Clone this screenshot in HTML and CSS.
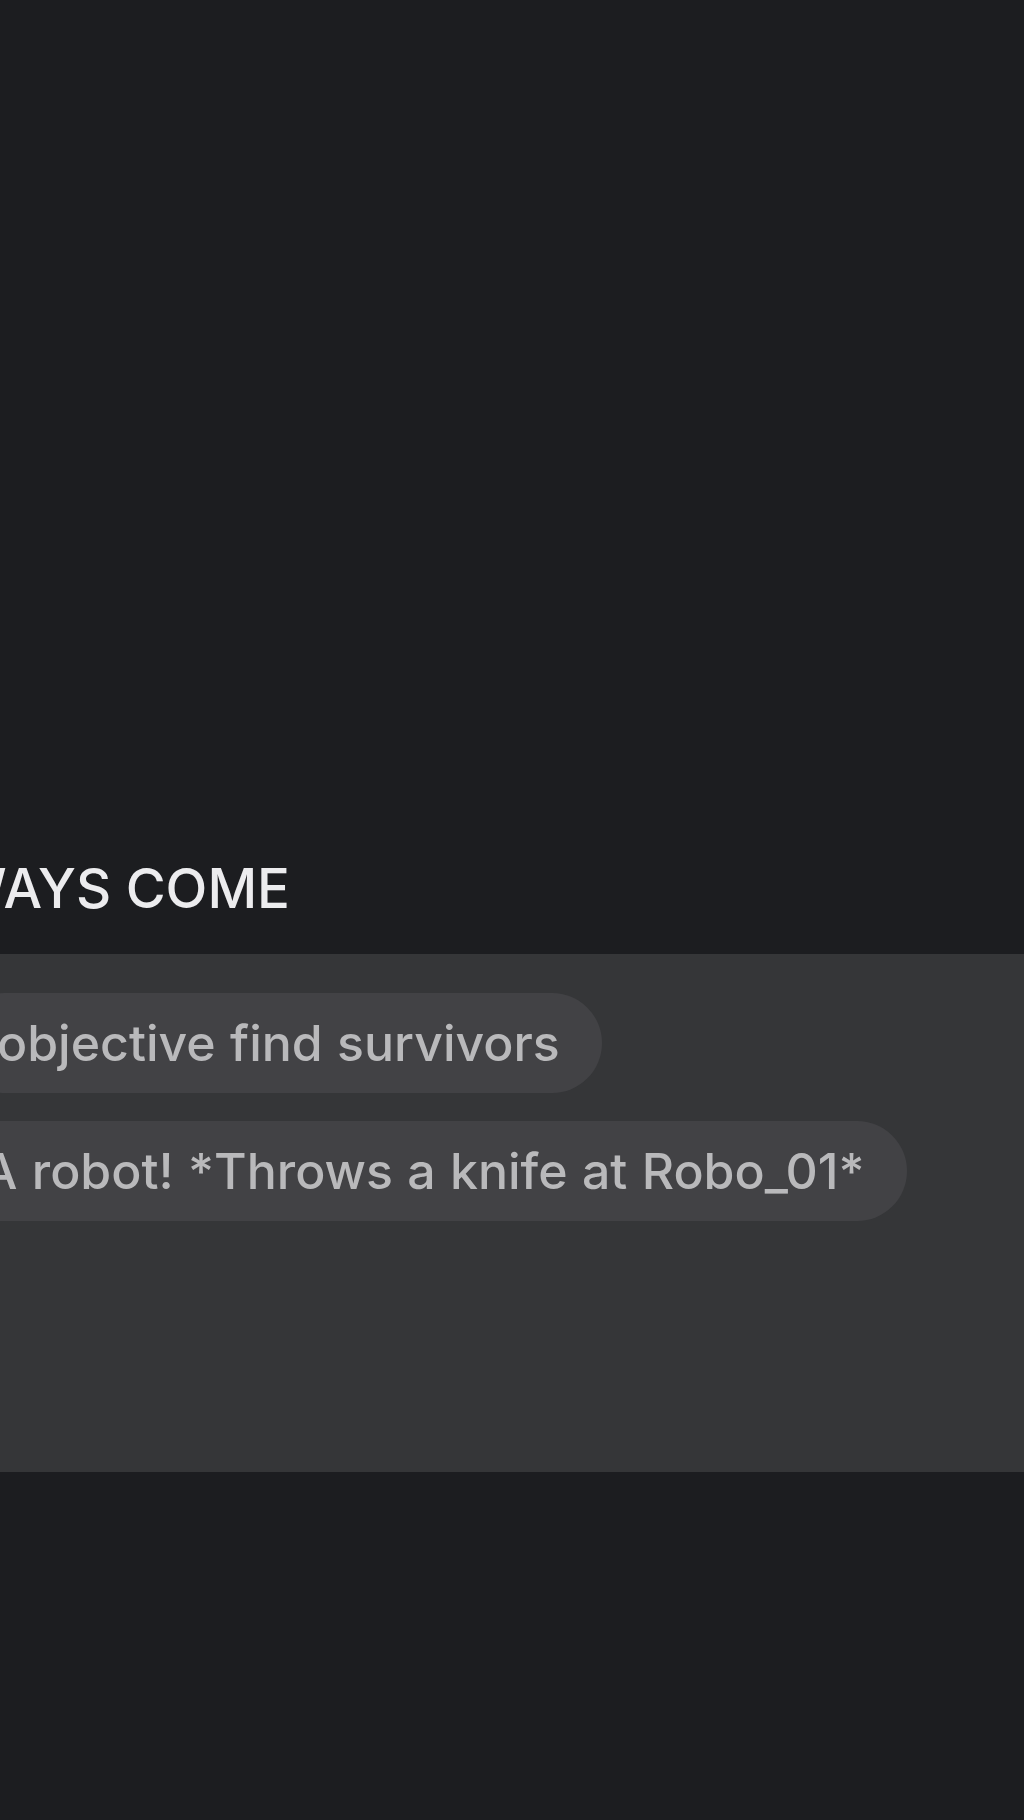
FILE: index.html
```html
<!DOCTYPE html>
<html lang="en">
<head>
<meta charset="utf-8">
<title>Chat</title>
<link rel="stylesheet" href="styles.css">
</head>
<body>
<main class="screen">
  <header class="title-row">
    <h1 class="title">ALWAYS COME</h1>
  </header>
  <section class="panel">
    <div class="bubble bubble-one">objective find survivors</div>
    <div class="bubble bubble-two">A robot! *Throws a knife at Robo_01*</div>
  </section>
</main>
</body>
</html>
```
FILE: styles.css
```css
html, body {
  margin: 0;
  padding: 0;
  background: #1c1d20;
}
.screen {
  width: 1024px;
  height: 1820px;
  overflow: hidden;
  font-family: Inter, "Noto Sans", "Liberation Sans", sans-serif;
  display: flex;
  flex-direction: column;
  padding-top: 855px;
  box-sizing: border-box;
}
.title-row {
  width: 290px;
  display: flex;
  justify-content: flex-end;
  margin-bottom: 32px;
}
.title {
  margin: 0;
  flex: none;
  font-size: 54.5px;
  line-height: 67px;
  font-weight: 500;
  color: #ececee;
  white-space: nowrap;
}
.panel {
  background: #353638;
  height: 518px;
  box-sizing: border-box;
  padding-top: 39px;
  display: flex;
  flex-direction: column;
  align-items: flex-start;
  gap: 28px;
}
.bubble {
  background: #424245;
  color: #b9b9bb;
  font-size: 50px;
  font-weight: 500;
  line-height: 100px;
  height: 100px;
  border-radius: 50px;
  padding: 0 42px;
  white-space: nowrap;
  word-spacing: 1px;
}
.bubble-one { margin-left: -45px; }
.bubble-two { margin-left: -60px; }
```
